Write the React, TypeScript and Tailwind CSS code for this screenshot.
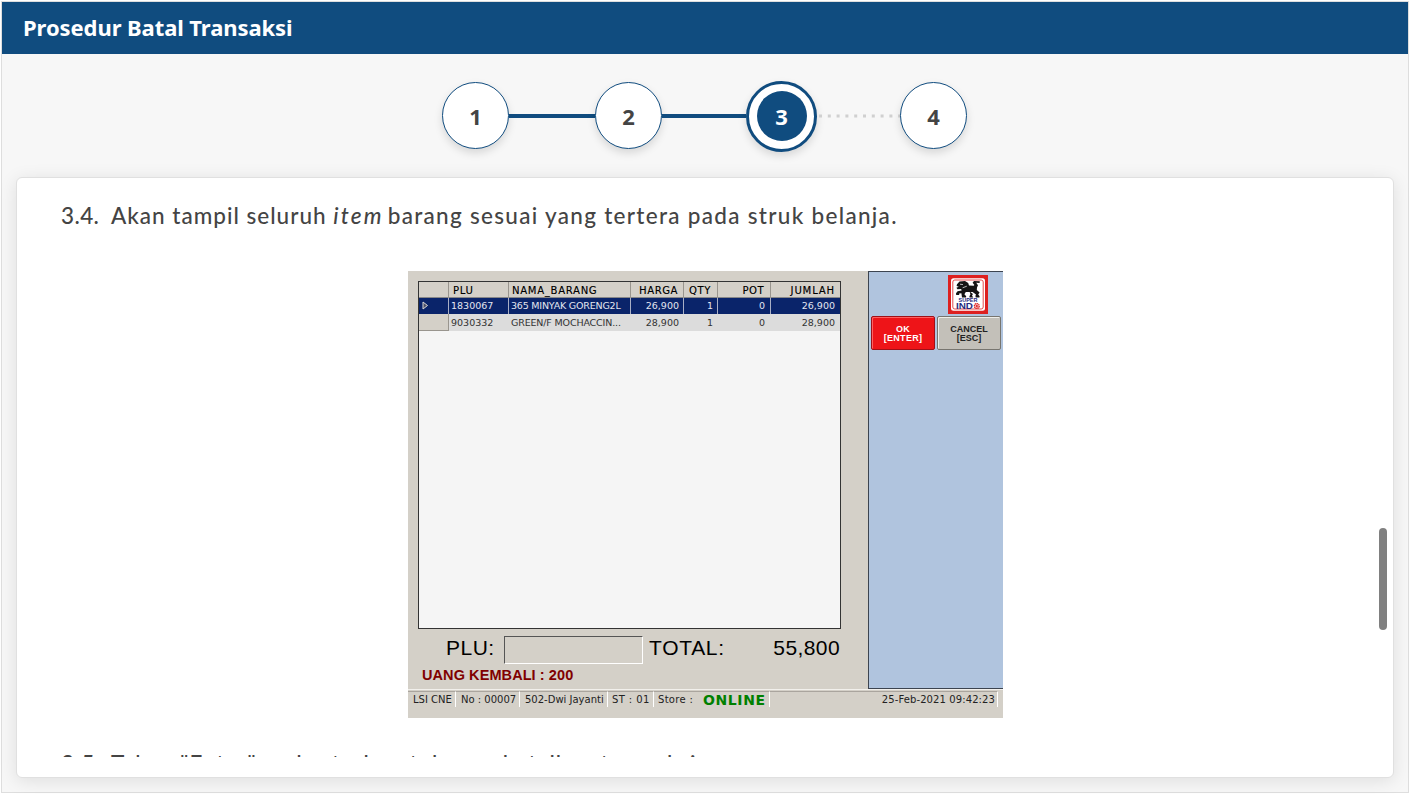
import React from "react";

const cols = "grid grid-cols-[30px_60px_122px_53px_34px_53px_70px]";

function Lion() {
  return (
    <svg viewBox="0 0 40 39" className="h-[39px] w-10">
      <rect width="40" height="39" fill="#dd2020" />
      <rect x="3" y="3.2" width="34" height="32.6" rx="2.5" fill="#fff" />
      <rect x="4.8" y="5" width="30.4" height="29" rx="2" fill="#fff" stroke="#dd2020" strokeWidth="0.8" />
      <path
        d="M9 9.2 L11.5 6.6 L17 6 L20.2 8 L21 10.6 L25.6 10.8 L26.4 10 L24.6 7.8 L26 6 L31.8 6.2 L31.6 8 L28.2 7.8 L30 10.2 L29 12.4 L28.8 15 L31.6 17.4 L30.2 19.6 L31.6 21.2 L31.4 22.6 L27.8 22.6 L27.4 21 L28 19.4 L24.6 17 L17.8 17 L16.4 19.2 L18.2 21.2 L18 22.6 L14 22.6 L13.4 18.2 L11.2 18.4 L11.2 20 L8.2 20 L8 18.2 L9.6 16.2 L13.6 15.4 L13.2 14 L9.4 14.2 L8.4 12.8 L10.8 11.8 L8.6 11 Z"
        fill="#141414"
      />
      <path d="M21.6 16.5l3.4 2.6-1 1.4 1.2 2.1h-3.6l-.2-1.4 1-1.6z" fill="#141414" />
      <path d="M12 9.2l3 .4M14.6 12.8l4.2-1.6" stroke="#fff" strokeWidth="0.7" />
      <text x="10.6" y="27.4" fontSize="5.2" fontWeight="700" fill="#262a80" textLength="18.8" lengthAdjust="spacingAndGlyphs">SUPER</text>
      <text x="8" y="34" fontSize="8.4" fontWeight="700" fill="#262a80" textLength="17" lengthAdjust="spacingAndGlyphs">IND</text>
      <circle cx="28.8" cy="31" r="2.5" fill="#f6b4b4" stroke="#dd2020" strokeWidth="1.2" strokeDasharray="1.4 0.5" />
      <circle cx="28.8" cy="31" r="1" fill="#dd2020" />
    </svg>
  );
}

function Step({ n }: { n: number }) {
  return (
    <div className="-mt-px flex size-[67px] shrink-0 items-center justify-center rounded-full border-[1.5px] border-[#104c7f] bg-white pt-0.5 text-[22px] font-bold text-[#444] shadow-[0_4px_8px_rgba(0,0,0,0.13)]">
      {n}
    </div>
  );
}

function StatusItem({ children, className }: { children?: React.ReactNode; className: string }) {
  return (
    <div className={"h-[16px] shrink-0 whitespace-nowrap border-r border-t border-r-white border-t-[#aaa59e] leading-[15px] " + className}>
      {children}
    </div>
  );
}

function Register() {
  return (
    <div className="flex h-[447px] w-[595px] flex-col bg-[#d4d0c8] font-['DejaVu_Sans',sans-serif] text-[10px] text-black">
      <div className="flex h-[418px]">
        <div className="flex w-[460px] flex-col pl-[10px] pt-[9.5px]">
          <div className="h-[348px] w-[423px] border border-[#333] bg-[#f5f5f5]">
            <div className={cols + " h-4 border-b border-[#888] bg-[#d4d0c8] text-[10px] leading-[17px] [&>div]:whitespace-nowrap [&>div]:border-r [&>div]:border-[#99958e] [&>div:last-child]:border-r-0 [text-shadow:0.3px_0_0_rgba(0,0,0,0.35)]"}>
              <div />
              <div className="pl-1 tracking-[0.7px]">PLU</div>
              <div className="pl-[3px] tracking-[0.75px]">NAMA_BARANG</div>
              <div className="pr-[5px] text-right tracking-[0.6px]">HARGA</div>
              <div className="pl-[5px] tracking-[0.6px]">QTY</div>
              <div className="pr-1.5 text-right tracking-[0.5px]">POT</div>
              <div className="pr-1.5 text-right tracking-[0.9px]">JUMLAH</div>
            </div>
            <div className={cols + " h-4 bg-[#0a246a] text-[9.5px] leading-4 text-[#e4e6f0] [&>div]:whitespace-nowrap [&>div]:border-r [&>div]:border-[#a9afc5] [&>div:last-child]:border-r-0"}>
              <div className="pl-[3px] pt-[3px]">
                <svg viewBox="0 0 7 9" className="h-[9px] w-[7px]">
                  <path d="M1 1v7l4.5-3.5z" fill="#4c5066" stroke="#d6d6d6" />
                </svg>
              </div>
              <div className="pl-0.5">1830067</div>
              <div className="pl-0.5 tracking-[-0.2px]">365 MINYAK GORENG2L</div>
              <div className="pr-1 text-right">26,900</div>
              <div className="pr-1 text-right">1</div>
              <div className="pr-[5px] text-right">0</div>
              <div className="pr-1.5 text-right">26,900</div>
            </div>
            <div className={cols + " h-[17px] bg-[#dcdcdc] text-[9.5px] leading-[17px] text-[#333] [&>div]:whitespace-nowrap"}>
              <div className="border-b border-r border-[#99958e] bg-[#d4d0c8]" />
              <div className="pl-0.5">9030332</div>
              <div className="pl-0.5 tracking-[-0.15px]">GREEN/F MOCHACCIN...</div>
              <div className="pr-[5px] text-right">28,900</div>
              <div className="pr-[5px] text-right">1</div>
              <div className="pr-1.5 text-right">0</div>
              <div className="pr-1.5 text-right">28,900</div>
            </div>
          </div>
          <div className="mt-[7px] flex h-7 w-[423px] items-center font-['Liberation_Sans',sans-serif] text-[21px] leading-6">
            <span className="w-[86px] pb-[3px] pl-7 tracking-[0.5px]">PLU:</span>
            <div className="h-7 w-[139px] border border-b-white border-l-[#555] border-r-white border-t-[#555]" />
            <span className="pb-[3px] pl-1.5 tracking-[0.7px]">TOTAL:</span>
            <span className="ml-auto pb-[3px] pr-px tracking-[0.4px]">55,800</span>
          </div>
          <div className="pl-1 pt-0.5 font-['Liberation_Sans',sans-serif] text-[14.5px] font-bold leading-[18px] tracking-[0.08px] text-[#800000]">
            UANG KEMBALI : 200
          </div>
        </div>
        <div className="flex-1 border border-r-0 border-[#3c4450] bg-[#b0c4de] pl-0.5 pt-[3px]">
          <div className="pl-[77px] font-['Liberation_Sans',sans-serif]">
            <Lion />
          </div>
          <div className="mt-0.5 flex gap-0.5 text-center font-['Liberation_Sans',sans-serif] text-[9px] font-bold leading-[9px]">
            <div className="flex h-[34px] w-[64px] flex-col justify-center rounded-[2px] border border-[#a01018] bg-[#ee1418] pt-0.5 tracking-[0.3px] text-white shadow-[inset_1px_1px_0_#ff6060]">
              <span>OK</span>
              <span>[ENTER]</span>
            </div>
            <div className="flex h-[34px] w-[64px] flex-col justify-center rounded-[2px] border border-[#77756f] bg-[#c3c0b9] pt-0.5 text-[#222] shadow-[inset_1px_1px_0_#eeeeea]">
              <span>CANCEL</span>
              <span>[ESC]</span>
            </div>
          </div>
        </div>
      </div>
      <div className="flex border-t border-[#f2f0ec] pt-px text-[#222]">
        <StatusItem className="w-[48px] pl-[5px]">LSI CNE</StatusItem>
        <StatusItem className="w-[64px] pl-[5px]">No : 00007</StatusItem>
        <StatusItem className="w-[88px] pl-[5px]">502-Dwi Jayanti</StatusItem>
        <StatusItem className="w-[46px] pl-1 tracking-[0.4px]">ST : 01</StatusItem>
        <StatusItem className="w-[116px] pl-1">
          <div className="flex tracking-[0.3px]">
            <span className="w-[45px]">Store :</span>
            <b className="text-[14px] leading-[17px] tracking-[0.6px] text-[#008000]">ONLINE</b>
          </div>
        </StatusItem>
        <StatusItem className="w-[228px] pr-0.5 text-right tracking-[0.1px]">25-Feb-2021 09:42:23</StatusItem>
      </div>
    </div>
  );
}

export default function App() {
  return (
    <div className="h-[794px] w-[1410px] overflow-hidden bg-white p-px">
      <div className="flex h-[792px] w-[1408px] flex-col border border-[#dedede] bg-[#f7f7f7] font-['Noto_Sans',sans-serif]">
        <header className="flex h-[52px] shrink-0 items-center bg-[#104c7f] pb-0.5 pl-[21px] text-[22px] font-bold tracking-[-0.08px] text-white">
          Prosedur Batal Transaksi
        </header>
        <div className="flex h-[124px] shrink-0 items-center justify-center pr-px">
          <Step n={1} />
          <div className="h-1 w-[86px] bg-[#104c7f]" />
          <Step n={2} />
          <div className="h-1 w-[84px] bg-[#104c7f]" />
          <div className="flex size-[71px] items-center justify-center rounded-full border-[3.5px] border-[#104c7f] bg-white shadow-[0_4px_8px_rgba(0,0,0,0.13)]">
            <div className="-mt-px flex size-[50px] items-center justify-center rounded-full bg-[#104c7f] pt-0.5 text-[22px] font-bold text-white">3</div>
          </div>
          <svg className="-mt-px h-1 w-[83px]" viewBox="0 0 83 4">
            <path d="M2 2H83" stroke="#d0d0d0" strokeWidth="3" strokeDasharray="3 5.8" />
          </svg>
          <Step n={4} />
        </div>
        <main className="-mt-px ml-[14px] flex h-[601px] w-[1378px] rounded-md border border-[#e0e0e0] bg-white shadow-[0_3px_18px_rgba(0,0,0,0.1)]">
          <div className="mt-5 h-[559px] w-[1362px] overflow-hidden pl-11 font-[Lato,sans-serif] text-[22.5px] font-medium leading-9 text-[#444]">
            <div className="flex whitespace-nowrap tracking-[1.3px]">
              <span className="w-[50px] tracking-[0.4px]">3.4.</span>
              <span>
                <span className="tracking-[1px]">Akan tampil seluruh </span>
                <i className="mr-[-3px] tracking-[2.2px]">item</i> barang sesuai yang tertera pada struk belanja.
              </span>
            </div>
            <div className="ml-[347px] mt-[37px]">
              <Register />
            </div>
            <div className="mt-7 flex whitespace-nowrap tracking-[0.9px]">
              <span className="w-[50px]">3.5.</span>
              <span>Tekan "Enter" pada struk untuk membatalkan transaksi.</span>
            </div>
          </div>
          <div className="mt-[350px] h-[102px] w-2 rounded-full bg-[#808080]" />
        </main>
      </div>
    </div>
  );
}
